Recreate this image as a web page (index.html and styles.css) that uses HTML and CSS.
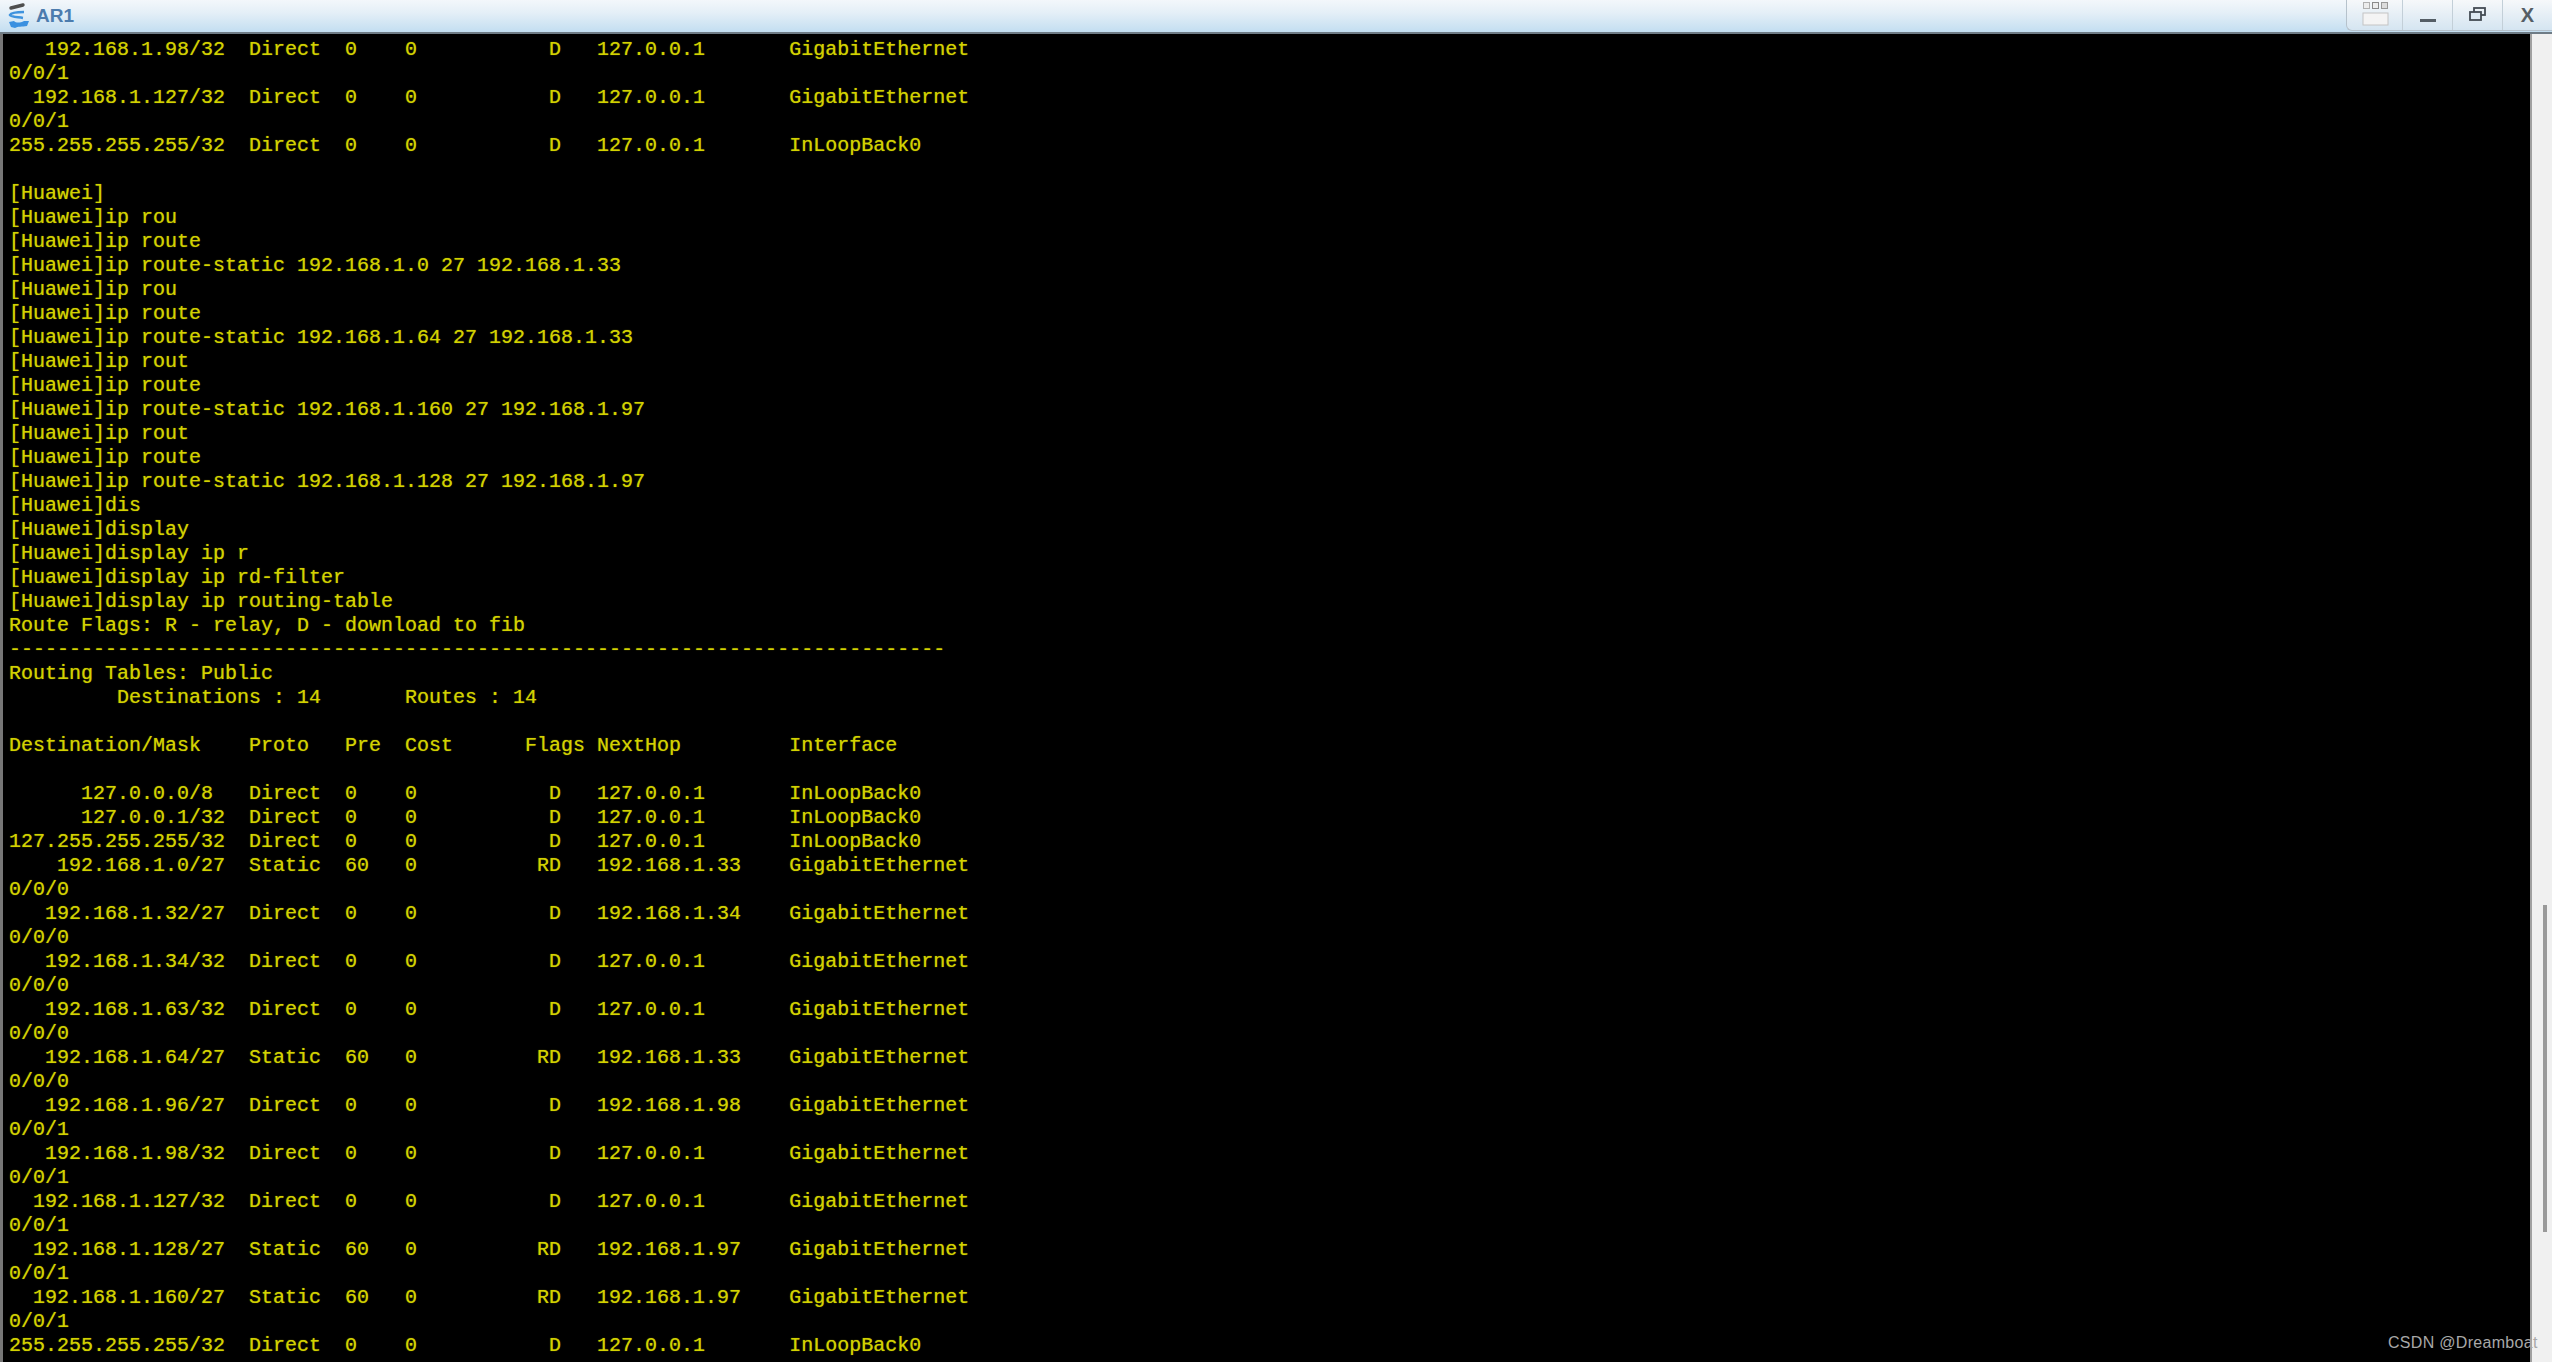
FILE: index.html
```html
<!DOCTYPE html>
<html lang="en">
<head>
<meta charset="utf-8">
<title>AR1</title>
<link rel="stylesheet" href="styles.css">
</head>
<body>
<div class="window">
<header class="titlebar">
  <div class="title">
    <svg class="logo" width="24" height="28" viewBox="0 0 24 28">
      <path d="M3 6 L15 3" stroke="#4f4f4f" stroke-width="3.4" stroke-linecap="round" fill="none"/>
      <path d="M16 10 C9 10 3 11 2 13 C3 15 9 15 15 16" stroke="#3f93de" stroke-width="2.6" fill="none"/>
      <path d="M1 20 L6 19 C8 21 12 21 16 19 L21 19 L19 24 C14 25 10 24 7 26 L3 25 Z" fill="#3a90e0"/>
    </svg>
    <span class="title-text">AR1</span>
  </div>
  <div class="controls">
    <button class="ctl ctl-layout" aria-label="Layout">
      <svg width="28" height="26" viewBox="0 0 28 26">
        <rect x="2.5" y="2.5" width="6" height="6" fill="#ececec" stroke="#b0b0b0"/>
        <rect x="11.5" y="2.5" width="6" height="6" fill="#ececec" stroke="#8a8a8a"/>
        <rect x="20.5" y="2.5" width="6" height="6" fill="#dcdcdc" stroke="#999"/>
        <rect x="2" y="13" width="25" height="12" fill="#f4f4f4" stroke="#c4c4c4"/>
      </svg>
    </button>
    <button class="ctl" aria-label="Minimize">
      <svg width="18" height="26" viewBox="0 0 18 26"><rect x="1" y="19" width="16" height="3" fill="#555e66"/></svg>
    </button>
    <button class="ctl" aria-label="Restore">
      <svg width="18" height="26" viewBox="0 0 18 26" fill="none" stroke="#444c54" stroke-width="1.8">
        <rect x="5" y="8" width="11" height="7"/><rect x="1" y="12" width="11" height="8" fill="#dfeaf3"/>
      </svg>
    </button>
    <button class="ctl ctl-close" aria-label="Close">X</button>
  </div>
</header>
<main class="content">
<pre class="terminal">   192.168.1.98/32  Direct  0    0           D   127.0.0.1       GigabitEthernet
0/0/1
  192.168.1.127/32  Direct  0    0           D   127.0.0.1       GigabitEthernet
0/0/1
255.255.255.255/32  Direct  0    0           D   127.0.0.1       InLoopBack0

[Huawei]
[Huawei]ip rou
[Huawei]ip route
[Huawei]ip route-static 192.168.1.0 27 192.168.1.33
[Huawei]ip rou
[Huawei]ip route
[Huawei]ip route-static 192.168.1.64 27 192.168.1.33
[Huawei]ip rout
[Huawei]ip route
[Huawei]ip route-static 192.168.1.160 27 192.168.1.97
[Huawei]ip rout
[Huawei]ip route
[Huawei]ip route-static 192.168.1.128 27 192.168.1.97
[Huawei]dis
[Huawei]display
[Huawei]display ip r
[Huawei]display ip rd-filter
[Huawei]display ip routing-table
Route Flags: R - relay, D - download to fib
------------------------------------------------------------------------------
Routing Tables: Public
         Destinations : 14       Routes : 14

Destination/Mask    Proto   Pre  Cost      Flags NextHop         Interface

      127.0.0.0/8   Direct  0    0           D   127.0.0.1       InLoopBack0
      127.0.0.1/32  Direct  0    0           D   127.0.0.1       InLoopBack0
127.255.255.255/32  Direct  0    0           D   127.0.0.1       InLoopBack0
    192.168.1.0/27  Static  60   0          RD   192.168.1.33    GigabitEthernet
0/0/0
   192.168.1.32/27  Direct  0    0           D   192.168.1.34    GigabitEthernet
0/0/0
   192.168.1.34/32  Direct  0    0           D   127.0.0.1       GigabitEthernet
0/0/0
   192.168.1.63/32  Direct  0    0           D   127.0.0.1       GigabitEthernet
0/0/0
   192.168.1.64/27  Static  60   0          RD   192.168.1.33    GigabitEthernet
0/0/0
   192.168.1.96/27  Direct  0    0           D   192.168.1.98    GigabitEthernet
0/0/1
   192.168.1.98/32  Direct  0    0           D   127.0.0.1       GigabitEthernet
0/0/1
  192.168.1.127/32  Direct  0    0           D   127.0.0.1       GigabitEthernet
0/0/1
  192.168.1.128/27  Static  60   0          RD   192.168.1.97    GigabitEthernet
0/0/1
  192.168.1.160/27  Static  60   0          RD   192.168.1.97    GigabitEthernet
0/0/1
255.255.255.255/32  Direct  0    0           D   127.0.0.1       InLoopBack0</pre>
<aside class="scroll"><div class="thumb"></div></aside>
</main>
</div>
<div class="watermark">CSDN @Dreamboat</div>
</body>
</html>
```
FILE: styles.css
```css
* { box-sizing: border-box; }
html, body { margin: 0; height: 100%; overflow: hidden; background: #000; }
.window { display: flex; flex-direction: column; height: 1362px; }
.titlebar {
  height: 34px; flex: none; display: flex; justify-content: space-between;
  background: linear-gradient(#f3f7fb 0%, #e4eff7 40%, #c3def1 100%);
  border-bottom: 2px solid #6f7c86;
}
.title { display: flex; align-items: center; padding-left: 8px; gap: 4px; }
.logo { display: block; }
.title-text {
  font: bold 19px "Liberation Sans", sans-serif; color: #4c7cae;
}
.controls {
  display: flex; width: 206px; height: 31px;
  border-left: 1px solid #b6c2cc; border-bottom: 1px solid #b6c2cc;
  border-bottom-left-radius: 6px;
  background: linear-gradient(#f6f8fa, #d5e5f1);
}
.ctl {
  flex: 1; padding: 0; border: 0; border-right: 1px solid #c3cfd8; background: none;
  display: flex; align-items: flex-start; justify-content: center;
}
.ctl-layout { flex: none; width: 56px; }
.ctl-close {
  border-right: 0; font: bold 20px/30px "Liberation Sans", sans-serif; color: #555e66;
}
.content { flex: 1; display: flex; min-height: 0; }
.terminal {
  flex: 1; margin: 0; padding: 4px 0 0 6px; overflow: hidden;
  background: #000; color: #d2d200;
  border-left: 3px solid #777;
  font: 20px/24px "Liberation Mono", monospace;
  text-shadow: 0 0 1px #9a9a00;
}
.scroll {
  width: 22px; flex: none; background: #f0f0f0; border-left: 2px solid #a0a0a0;
  padding: 871px 0 0 11px;
}
.thumb { width: 4px; height: 327px; background: #999; }
.watermark {
  position: absolute; left: 2388px; top: 1334px;
  font: 16px/18px "Liberation Sans", sans-serif; color: #a8a8a8; letter-spacing: .3px;
}
```
